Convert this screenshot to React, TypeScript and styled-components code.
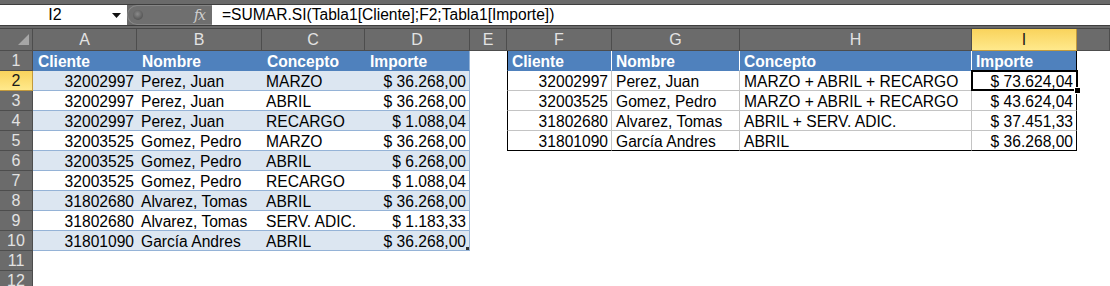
import React from 'react';
import styled, { createGlobalStyle, css } from 'styled-components';

const Global = createGlobalStyle`
  html, body { margin: 0; padding: 0; background: #ffffff; }
  body { font-family: "Liberation Sans", Arial, sans-serif; }
`;

const Frame = styled.div`
  width: 1110px;
  height: 286px;
  overflow: hidden;
  background: #ffffff;
`;

const Toolbar = styled.div`
  background: #6a6a6a;
  padding: 4px 0 2px;
  border-bottom: 1px solid #474747;
`;

const Bar = styled.div`
  display: flex;
  height: 20px;
  border-top: 1px solid #3e3e3e;
  border-bottom: 1px solid #3e3e3e;
`;

const NameBox = styled.div`
  width: 127px;
  flex: none;
  background: #ffffff;
  display: flex;
  align-items: center;
  font-size: 16px;
  color: #000;
`;

const NameText = styled.span`
  width: 110px;
  text-align: center;
`;

const Arrow = styled.svg`
  margin-left: 2px;
`;

const FxPill = styled.div`
  width: 85px;
  flex: none;
  box-sizing: border-box;
  background: #6f6f6f;
  border: 1px solid #878787;
  border-right: none;
  border-radius: 10px 0 0 10px;
  display: flex;
  align-items: center;
  justify-content: space-between;
  padding: 0 7px 0 5px;
`;

const Knob = styled.span`
  width: 10px;
  height: 10px;
  border-radius: 50%;
  background: radial-gradient(circle at 45% 40%, #8a8a8a 0%, #5a5a5a 65%, #4c4c4c 100%);
`;

const FxLabel = styled.span`
  font-family: "DejaVu Serif", "Liberation Serif", serif;
  font-style: italic;
  font-size: 14px;
  color: #cfcfcf;
  letter-spacing: -1px;
`;

const FormulaInput = styled.div`
  flex: 1;
  background: #ffffff;
  display: flex;
  align-items: center;
  padding-left: 10px;
  font-size: 15.6px;
  color: #000;
  white-space: nowrap;
`;

const Sheet = styled.div`
  display: grid;
  grid-template-columns: 33px 104px 125px 103px 105px 37px 105px 128px 232px 105px 1fr;
  grid-template-rows: 22px;
  grid-auto-rows: 20px;
`;

const headerBase = css`
  box-sizing: border-box;
  display: flex;
  align-items: center;
  justify-content: center;
  font-size: 16px;
  border-right: 1px solid #4d4d4d;
  border-bottom: 1px solid #4d4d4d;
`;

const selectedHead = css`
  background: linear-gradient(#f9d35c, #ffe98c);
  color: #1a1a1a;
  border-right-color: #c39a3c;
  border-bottom-color: #c39a3c;
`;

const Corner = styled.div`
  ${headerBase};
  align-items: flex-end;
  justify-content: flex-end;
  background: #6b6b6b;
  padding: 0 3px 5px 0;
`;

const ColHead = styled.div<{ $sel?: boolean }>`
  ${headerBase};
  background: #6b6b6b;
  color: #e2e2e2;
  ${(p) => p.$sel && selectedHead};
`;

const RowHead = styled.div<{ $sel?: boolean }>`
  ${headerBase};
  background: #6b6b6b;
  color: #e2e2e2;
  align-items: flex-end;
  padding-bottom: 1px;
  line-height: 17px;
  ${(p) => p.$sel && selectedHead};
`;

const cellBase = css`
  box-sizing: border-box;
  position: relative;
  display: flex;
  align-items: flex-end;
  padding: 0 3px 0 4px;
  font-size: 15.6px;
  line-height: 17px;
  white-space: nowrap;
  color: #000;
`;

const LeftCell = styled.div<{ $head?: boolean; $band?: boolean; $num?: boolean; $edge?: boolean; $handle?: boolean }>`
  ${cellBase};
  justify-content: ${(p) => (p.$num ? 'flex-end' : 'flex-start')};
  background: ${(p) => (p.$head ? '#4f81bd' : p.$band ? '#dce6f1' : '#ffffff')};
  ${(p) =>
    p.$head
      ? css`
          color: #ffffff;
          font-weight: bold;
          padding-left: 5px;
          border-bottom: 1px solid #4f81bd;
        `
      : css`
          border-bottom: 1px solid #95b3d7;
        `};
  ${(p) => p.$edge && css`border-right: 1px solid #95b3d7;`};
  ${(p) =>
    p.$handle &&
    css`
      &::after {
        content: '';
        position: absolute;
        right: 0;
        bottom: 0;
        width: 3px;
        height: 3px;
        background: #303030;
      }
    `};
`;

const RightCell = styled.div<{
  $head?: boolean;
  $num?: boolean;
  $first?: boolean;
  $lastCol?: boolean;
  $lastRow?: boolean;
  $sel?: boolean;
}>`
  ${cellBase};
  justify-content: ${(p) => (p.$num ? 'flex-end' : 'flex-start')};
  background: ${(p) => (p.$head ? '#4f81bd' : '#ffffff')};
  border-right: 1px solid ${(p) => (p.$lastCol ? '#000' : p.$head ? '#ffffff' : '#c4c4c4')};
  border-bottom: 1px solid ${(p) => (p.$lastRow ? '#000' : p.$head ? '#4f81bd' : '#c4c4c4')};
  ${(p) => p.$first && css`border-left: 1px solid #000;`};
  ${(p) =>
    p.$head &&
    css`
      color: #ffffff;
      font-weight: bold;
      padding-left: 4px;
    `};
  ${(p) =>
    p.$sel &&
    css`
      &::before {
        content: '';
        position: absolute;
        inset: -1px -2px -1px -1px;
        border: 2px solid #000;
        pointer-events: none;
      }
      &::after {
        content: '';
        position: absolute;
        right: -5px;
        bottom: -4px;
        width: 5px;
        height: 5px;
        background: #000;
        border: 1px solid #fff;
        z-index: 2;
      }
    `};
`;

const Blank = styled.div`
  background: #ffffff;
`;

const COLS = ['A', 'B', 'C', 'D', 'E', 'F', 'G', 'H', 'I', ''];

const LEFT_HEAD = ['Cliente', 'Nombre', 'Concepto', 'Importe'];
const LEFT_ROWS = [
  ['32002997', 'Perez, Juan', 'MARZO', '$ 36.268,00'],
  ['32002997', 'Perez, Juan', 'ABRIL', '$ 36.268,00'],
  ['32002997', 'Perez, Juan', 'RECARGO', '$ 1.088,04'],
  ['32003525', 'Gomez, Pedro', 'MARZO', '$ 36.268,00'],
  ['32003525', 'Gomez, Pedro', 'ABRIL', '$ 6.268,00'],
  ['32003525', 'Gomez, Pedro', 'RECARGO', '$ 1.088,04'],
  ['31802680', 'Alvarez, Tomas', 'ABRIL', '$ 36.268,00'],
  ['31802680', 'Alvarez, Tomas', 'SERV. ADIC.', '$ 1.183,33'],
  ['31801090', 'García Andres', 'ABRIL', '$ 36.268,00'],
];

const RIGHT_ROWS = [
  ['32002997', 'Perez, Juan', 'MARZO + ABRIL + RECARGO', '$ 73.624,04'],
  ['32003525', 'Gomez, Pedro', 'MARZO + ABRIL + RECARGO', '$ 43.624,04'],
  ['31802680', 'Alvarez, Tomas', 'ABRIL + SERV. ADIC.', '$ 37.451,33'],
  ['31801090', 'García Andres', 'ABRIL', '$ 36.268,00'],
];

const NUM_COLS = [0, 3];

function renderRow(r: number) {
  const cells: React.ReactNode[] = [];
  cells.push(
    <RowHead key={`h${r}`} $sel={r === 2}>
      {r}
    </RowHead>
  );
  for (let c = 0; c < 4; c++) {
    const key = `l${r}-${c}`;
    if (r === 1) {
      cells.push(
        <LeftCell key={key} $head $edge={c === 3}>
          {LEFT_HEAD[c]}
        </LeftCell>
      );
    } else if (r <= 10) {
      cells.push(
        <LeftCell
          key={key}
          $band={r % 2 === 0}
          $num={NUM_COLS.includes(c)}
          $edge={c === 3}
          $handle={r === 10 && c === 3}
        >
          {LEFT_ROWS[r - 2][c]}
        </LeftCell>
      );
    } else {
      cells.push(<Blank key={key} />);
    }
  }
  cells.push(<Blank key={`e${r}`} />);
  for (let c = 0; c < 4; c++) {
    const key = `r${r}-${c}`;
    if (r === 1) {
      cells.push(
        <RightCell key={key} $head $first={c === 0} $lastCol={c === 3}>
          {LEFT_HEAD[c]}
        </RightCell>
      );
    } else if (r <= 5) {
      cells.push(
        <RightCell
          key={key}
          $num={NUM_COLS.includes(c)}
          $first={c === 0}
          $lastCol={c === 3}
          $lastRow={r === 5}
          $sel={r === 2 && c === 3}
        >
          {RIGHT_ROWS[r - 2][c]}
        </RightCell>
      );
    } else {
      cells.push(<Blank key={key} />);
    }
  }
  cells.push(<Blank key={`j${r}`} />);
  return cells;
}

export default function App() {
  const rows = Array.from({ length: 12 }, (_, i) => i + 1);
  return (
    <Frame>
      <Global />
      <Toolbar>
        <Bar>
          <NameBox>
            <NameText>I2</NameText>
            <Arrow width="9" height="5" viewBox="0 0 9 5">
              <polygon points="0,0 9,0 4.5,5" fill="#111" />
            </Arrow>
          </NameBox>
          <FxPill>
            <Knob />
            <FxLabel>fx</FxLabel>
          </FxPill>
          <FormulaInput>=SUMAR.SI(Tabla1[Cliente];F2;Tabla1[Importe])</FormulaInput>
        </Bar>
      </Toolbar>
      <Sheet>
        <Corner>
          <svg width="11" height="11" viewBox="0 0 11 11">
            <polygon points="11,0 11,11 0,11" fill="#a6a6a6" />
          </svg>
        </Corner>
        {COLS.map((c) => (
          <ColHead key={c || 'J'} $sel={c === 'I'}>
            {c}
          </ColHead>
        ))}
        {rows.map((r) => renderRow(r))}
      </Sheet>
    </Frame>
  );
}
